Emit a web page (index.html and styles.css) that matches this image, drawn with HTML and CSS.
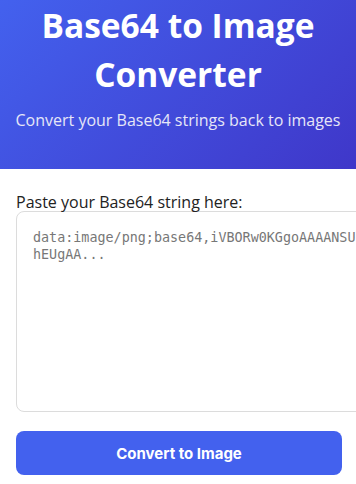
FILE: index.html
```html
<!DOCTYPE html>
<html lang="en">
<head>
    <meta charset="UTF-8">
    <meta name="viewport" content="width=device-width, initial-scale=1.0">
    <title>Base64 to Image Converter</title>
    <link rel="stylesheet" href="styles.css">
</head>
<body>

<!-- Header Section -->
<header>
    <h1>Base64 to Image Converter</h1>
    <p>Convert your Base64 strings back to images</p>
</header>

<!-- Converter -->
<div class="converter">
    <label for="base64-input">Paste your Base64 string here:</label>
    <textarea id="base64-input" placeholder="data:image/png;base64,iVBORw0KGgoAAAANSU&#10;hEUgAA..."></textarea>
    <button class="convert-button">Convert to Image</button>
</div>

</body>
</html>
```

FILE: styles.css
```css
body {
    margin: 0;
    font-family: "Open Sans", "Noto Sans", sans-serif;
    color: #222;
    background-color: white;
}

header {
    background: linear-gradient(135deg, #4361ee, #3f37c9);
    color: white;
    text-align: center;
    padding: 1px 8px 38px 8px;
}

header h1 {
    margin: 0;
    font-size: 33.5px;
    font-weight: bold;
    line-height: 1.45;
}

header p {
    margin: 11px 0 0 0;
    font-size: 16px;
    color: #e6e6f7; /* Lighter color for the subtitle */
}

.converter {
    padding: 24px 14px 20px 16px;
}

.converter label {
    display: block;
    font-size: 16px;
    line-height: 18px;
}

.converter textarea {
    display: block;
    width: 100%;
    height: 167px;
    padding: 17px 16px 15px 16px;
    border: 1px solid #dcdcdc;
    border-radius: 8px;
    font-family: "DejaVu Sans Mono", monospace;
    font-size: 13.4px;
    line-height: 17px;
    resize: none;
}

.converter textarea::placeholder {
    color: #777;
}

.convert-button {
    display: block;
    width: 100%;
    height: 44px;
    margin-top: 19px;
    background-color: #4361ee;
    color: white;
    border: none;
    border-radius: 8px;
    font-family: Inter, sans-serif;
    font-size: 15px;
    font-weight: bold;
    cursor: pointer;
}

.convert-button:hover {
    background-color: #3a56d4;
}
```
